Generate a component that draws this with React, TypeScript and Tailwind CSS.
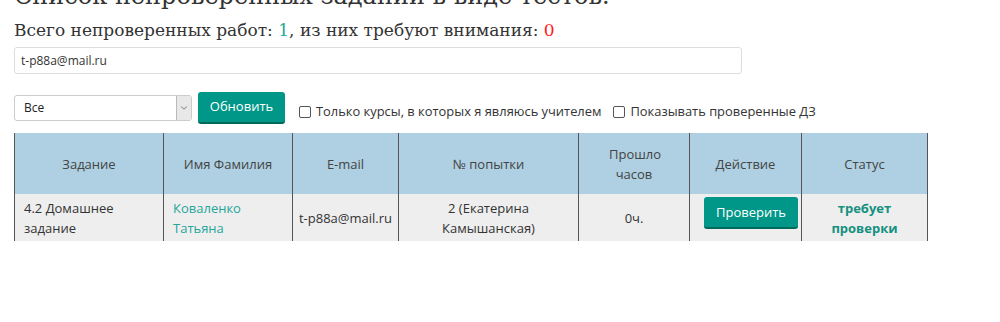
import { ChevronDown } from "lucide-react";

const cols = [
  { title: "Задание", w: "w-[149px]" },
  { title: "Имя Фамилия", w: "w-[129px]" },
  { title: "E-mail", w: "w-[106px]" },
  { title: "№ попытки", w: "w-[180px]" },
  { title: "Прошло часов", w: "w-[111px]", narrow: true },
  { title: "Действие", w: "w-[112px]" },
  { title: "Статус", w: "w-[126px]" },
];

function Check({ label }: { label: string }) {
  return (
    <label className="flex items-center gap-[5px] text-[12.9px] text-[#333]">
      <span className="inline-block h-[12px] w-[12px] rounded-[2px] border border-[#555] bg-white" />
      {label}
    </label>
  );
}

export default function App() {
  return (
    <div className="h-[322px] overflow-hidden bg-white px-[14px] font-['Open_Sans',sans-serif] text-[#444]">
      <h1 className="-mt-[18px] font-['DejaVu_Serif',serif] text-[24px] leading-[28px] text-[#333]">
        Список непроверенных заданий в виде тестов.
      </h1>
      <p className="mt-[9px] font-['DejaVu_Serif',serif] text-[17px] leading-[22px] text-[#333]">
        Всего непроверенных работ: <span className="text-[#26a69a]">1</span>, из них требуют
        внимания: <span className="text-[#ff1a1a]">0</span>
      </p>

      <div className="mt-[6px] flex h-[27px] w-[728px] items-center rounded-[3px] border border-[#ddd] px-[6px] text-[12px] text-[#333]">
        t-p88a@mail.ru
      </div>

      <div className="mt-[18px] flex items-center">
        <div className="flex h-[26px] w-[178px] items-center justify-between rounded-[3px] border border-[#ccc] bg-white text-[12px] text-[#222]">
          <span className="pl-[9px]">Все</span>
          <span className="flex h-full w-[15px] items-center justify-center rounded-r-[3px] border-l border-[#bbb] bg-[#e8e8e8]">
            <ChevronDown className="h-[10px] w-[10px] text-[#666]" strokeWidth={2} />
          </span>
        </div>
        <button className="ml-[6px] h-[32px] w-[87px] rounded-[3px] border-b-[2px] border-[#00695c] bg-[#009688] text-[13px] text-white">
          Обновить
        </button>
        <div className="ml-[14px] mt-[8px] flex items-center gap-[12px]">
          <Check label="Только курсы, в которых я являюсь учителем" />
          <Check label="Показывать проверенные ДЗ" />
        </div>
      </div>

      <table className="mt-[9px] w-[914px] table-fixed border-collapse text-[13px]">
        <thead>
          <tr className="h-[61px] bg-[#aed0e2]">
            {cols.map((c) => (
              <th
                key={c.title}
                className={`${c.w} border-x border-[#555] px-[8px] text-center font-normal leading-[20px] text-[#444]`}
              >
                {c.narrow ? (
                  <span className="mx-auto block w-[50px]">{c.title}</span>
                ) : (
                  c.title
                )}
              </th>
            ))}
          </tr>
        </thead>
        <tbody>
          <tr className="h-[47px] bg-[#eeeeee] leading-[20px] text-[#333]">
            <td className="border-x border-[#555] px-[9px]">4.2 Домашнее задание</td>
            <td className="border-x border-[#555] px-[9px] text-[#26a69a]">Коваленко Татьяна</td>
            <td className="border-x border-[#555] px-[2px] text-center">t-p88a@mail.ru</td>
            <td className="border-x border-[#555] px-[8px] text-center">
              2 (Екатерина
              <br />
              Камышанская)
            </td>
            <td className="border-x border-[#555] text-center">0ч.</td>
            <td className="border-x border-[#555] pb-[9px] pl-[14px] text-left">
              <button className="h-[32px] w-[94px] rounded-[3px] border-b-[2px] border-[#00695c] bg-[#009688] text-[13px] text-white">
                Проверить
              </button>
            </td>
            <td className="border-x border-[#555] px-[8px] text-center font-bold text-[#16907f]">
              требует
              <br />
              проверки
            </td>
          </tr>
        </tbody>
      </table>
    </div>
  );
}
